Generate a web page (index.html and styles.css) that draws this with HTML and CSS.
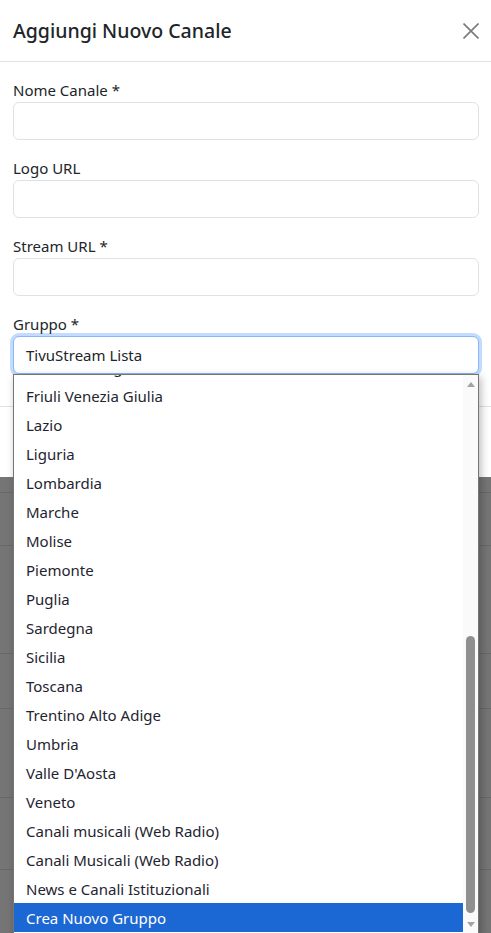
FILE: index.html
```html
<!DOCTYPE html>
<html lang="it">
<head>
<meta charset="utf-8">
<title>Aggiungi Nuovo Canale</title>
<link rel="stylesheet" href="styles.css">
</head>
<body>
<div class="page">
  <div class="modal">
    <div class="modal-header">
      <h5 class="modal-title">Aggiungi Nuovo Canale</h5>
      <button class="btn-close" aria-label="Chiudi">
        <svg viewBox="0 0 16 16" width="16" height="16"><path d="M0.5 0.5 L15.5 15.5 M15.5 0.5 L0.5 15.5" stroke="currentColor" stroke-width="1.6" fill="none"/></svg>
      </button>
    </div>
    <div class="modal-body">
      <div class="field">
        <label class="form-label">Nome Canale *</label>
        <div class="form-control"></div>
      </div>
      <div class="field">
        <label class="form-label">Logo URL</label>
        <div class="form-control"></div>
      </div>
      <div class="field">
        <label class="form-label">Stream URL *</label>
        <div class="form-control"></div>
      </div>
      <div class="field">
        <label class="form-label">Gruppo *</label>
        <div class="form-control form-select focused">TivuStream Lista</div>
      </div>
    </div>
    <div class="modal-footer"></div>
  </div>
  <div class="under">
    <div class="urow u1"></div>
    <div class="urow u2"></div>
    <div class="urow u3"></div>
    <div class="urow u4"></div>
    <div class="urow u5"></div>
    <div class="urow u6"></div>
  </div>

  <div class="listbox">
    <div class="options">
      <div class="options-inner">
        <div class="opt">Emilia Romagna</div>
        <div class="opt">Friuli Venezia Giulia</div>
        <div class="opt">Lazio</div>
        <div class="opt">Liguria</div>
        <div class="opt">Lombardia</div>
        <div class="opt">Marche</div>
        <div class="opt">Molise</div>
        <div class="opt">Piemonte</div>
        <div class="opt">Puglia</div>
        <div class="opt">Sardegna</div>
        <div class="opt">Sicilia</div>
        <div class="opt">Toscana</div>
        <div class="opt">Trentino Alto Adige</div>
        <div class="opt">Umbria</div>
        <div class="opt">Valle D'Aosta</div>
        <div class="opt">Veneto</div>
        <div class="opt">Canali musicali (Web Radio)</div>
        <div class="opt">Canali Musicali (Web Radio)</div>
        <div class="opt">News e Canali Istituzionali</div>
        <div class="opt selected">Crea Nuovo Gruppo</div>
      </div>
    </div>
    <div class="scrollbar">
      <div class="sb-btn"><span class="tri up"></span></div>
      <div class="sb-track"><div class="sb-thumb"></div></div>
      <div class="sb-btn"><span class="tri down"></span></div>
    </div>
  </div>
</div>
</body>
</html>
```
FILE: styles.css
```css
* { box-sizing: border-box; }
html, body { margin: 0; padding: 0; }
body {
  font-family: "Noto Sans", "Open Sans", sans-serif;
  font-size: 15px;
  color: #212529;
  background: #757575;
}
.page {
  position: relative;
  width: 491px;
  height: 933px;
  overflow: hidden;
  background: #757575;
}
.modal {
  background: #fff;
  width: 100%;
}
.modal-header {
  display: flex;
  align-items: center;
  justify-content: space-between;
  padding: 16px 12px 15px 13px;
  border-bottom: 1px solid #dee2e6;
}
.modal-title {
  margin: 0;
  font-size: 19.5px;
  font-weight: 500;
  line-height: 30px;
  color: #212529;
}
.btn-close {
  display: flex;
  padding: 0;
  border: 0;
  background: transparent;
  color: #7a7a7a;
  width: 16px;
  height: 16px;
}
.modal-body {
  padding: 16px 12px 16px 13px;
}
.field { margin-bottom: 16px; }
.form-label {
  display: block;
  line-height: 25px;
  height: 24px;
  color: #212529;
}
.form-control {
  height: 38px;
  border: 1px solid #dee2e6;
  border-radius: 6px;
  background: #fff;
}
.form-select {
  display: flex;
  align-items: center;
  padding: 0 12px;
  color: #212529;
}
.focused {
  border-color: #86b7fe;
  box-shadow: 0 0 0 3px rgba(13, 110, 253, 0.25);
}
.modal-footer {
  height: 71px;
  border-top: 1px solid #dee2e6;
}
.urow { border-bottom: 1px solid #686868; }
.u1 { height: 16px; }
.u2 { height: 53px; }
.u3 { height: 108px; }
.u4 { height: 55px; }
.u5 { height: 89px; }
.u6 { height: 72px; }

.listbox {
  position: absolute;
  left: 13px;
  top: 374px;
  width: 466px;
  height: 560px;
  display: flex;
  background: #fff;
  border: 1px solid #767676;
  box-shadow: 2px 3px 8px rgba(0, 0, 0, 0.28);
}
.options {
  flex: 1;
  overflow: hidden;
}
.options-inner { margin-top: -23px; }
.opt {
  height: 29px;
  line-height: 31px;
  padding-left: 12px;
  color: #1f2530;
  white-space: nowrap;
  overflow: hidden;
}
.opt.selected {
  background: #1b67d3;
  color: #fff;
}
.scrollbar {
  width: 15px;
  display: flex;
  flex-direction: column;
  background: #fafafa;
}
.sb-btn {
  height: 16px;
  display: flex;
  align-items: center;
  justify-content: center;
}
.tri {
  width: 0;
  height: 0;
  border-left: 4.5px solid transparent;
  border-right: 4.5px solid transparent;
}
.tri.up { border-bottom: 5px solid #a3a3a3; margin-top: 2px; }
.tri.down { border-top: 5px solid #a3a3a3; margin-top: -2px; }
.sb-track {
  flex: 1;
  display: flex;
  justify-content: center;
}
.sb-thumb {
  width: 9px;
  height: 277px;
  margin-top: 245px;
  border-radius: 5px;
  background: #8f8f8f;
}
```
